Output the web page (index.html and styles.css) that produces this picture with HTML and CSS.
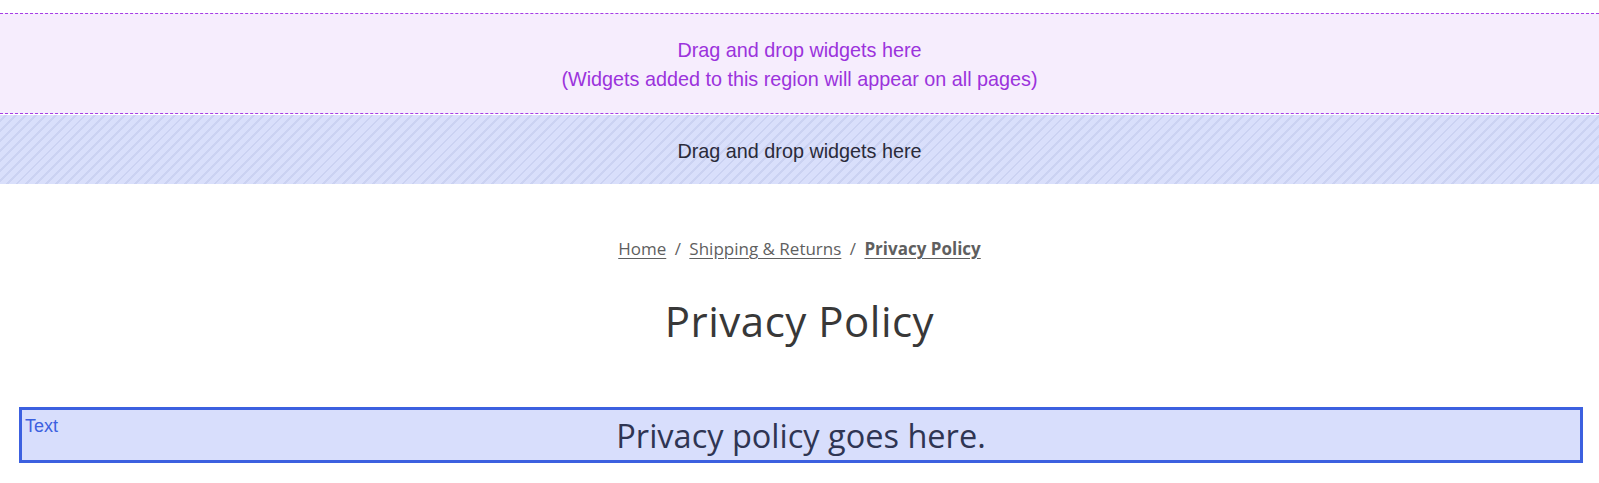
FILE: index.html
```html
<!DOCTYPE html>
<html lang="en">

<head>
    <meta charset="UTF-8">
    <meta name="viewport" content="width=device-width, initial-scale=1.0">
    <title>Privacy Policy</title>
    <link rel="stylesheet" href="styles.css">
</head>

<body>
    <!-- Global widget region -->
    <div class="region region-global">
        <p>Drag and drop widgets here</p>
        <p>(Widgets added to this region will appear on all pages)</p>
    </div>

    <!-- Page widget region -->
    <div class="region region-page">
        <p>Drag and drop widgets here</p>
    </div>

    <div class="page-header">
        <nav class="breadcrumbs">
            <a href="#">Home</a>
            <span class="sep">/</span>
            <a href="#">Shipping &amp; Returns</a>
            <span class="sep">/</span>
            <a href="#" class="current">Privacy Policy</a>
        </nav>
        <h1>Privacy Policy</h1>
    </div>

    <div class="text-widget">
        <span class="widget-label">Text</span>
        <p>Privacy policy goes here.</p>
    </div>
</body>

</html>
```

FILE: styles.css
```css
body {
    margin: 0;
    padding-top: 13px;
    font-family: 'Liberation Sans', Arial, sans-serif;
    background-color: #ffffff;
}

.region p {
    margin: 0;
    font-size: 19.8px;
    line-height: 29px;
}

.region-global {
    height: 99px;
    border-top: 1px dashed #a63de6;
    border-bottom: 1px dashed #a63de6;
    background-color: #f6edfd;
    color: #9b33dc;
    text-align: center;
    display: flex;
    flex-direction: column;
    justify-content: center;
}

.region-global p:first-child {
    padding-top: 2px;
}

.region-page {
    margin-top: 1px;
    height: 69px;
    background-color: #d9dffb;
    background-image: repeating-linear-gradient(-45deg,
            #d9dffb 0px,
            #d9dffb 5px,
            #cbd2f2 5px,
            #cbd2f2 7px);
    color: #2a2b3a;
    text-align: center;
    display: flex;
    flex-direction: column;
    justify-content: center;
    padding-top: 3px;
    box-sizing: border-box;
}

.page-header {
    text-align: center;
    padding-top: 53px;
}

.breadcrumbs {
    font-family: 'Open Sans', sans-serif;
    font-size: 17px;
    color: #5f5f5f;
}

.breadcrumbs a {
    color: #5f5f5f;
    text-decoration: underline;
    text-underline-offset: 3px;
}

.breadcrumbs .sep {
    margin: 0 4px;
}

.breadcrumbs .current {
    font-weight: 700;
}

h1 {
    margin: 32px 0 0;
    font-family: 'Open Sans', sans-serif;
    font-weight: 400;
    font-size: 42px;
    color: #383838;
    letter-spacing: 0.5px;
}

.text-widget {
    position: relative;
    margin: 58px 16px 0 19px;
    height: 50px;
    border: 3px solid #3c60e0;
    background-color: #d8defc;
    display: flex;
    align-items: center;
    justify-content: center;
}

.text-widget p {
    margin: 0;
    font-family: 'Open Sans', sans-serif;
    font-size: 32.5px;
    color: #2f3553;
}

.widget-label {
    position: absolute;
    left: 3px;
    top: 6px;
    font-size: 18px;
    color: #3c60e0;
}
```
